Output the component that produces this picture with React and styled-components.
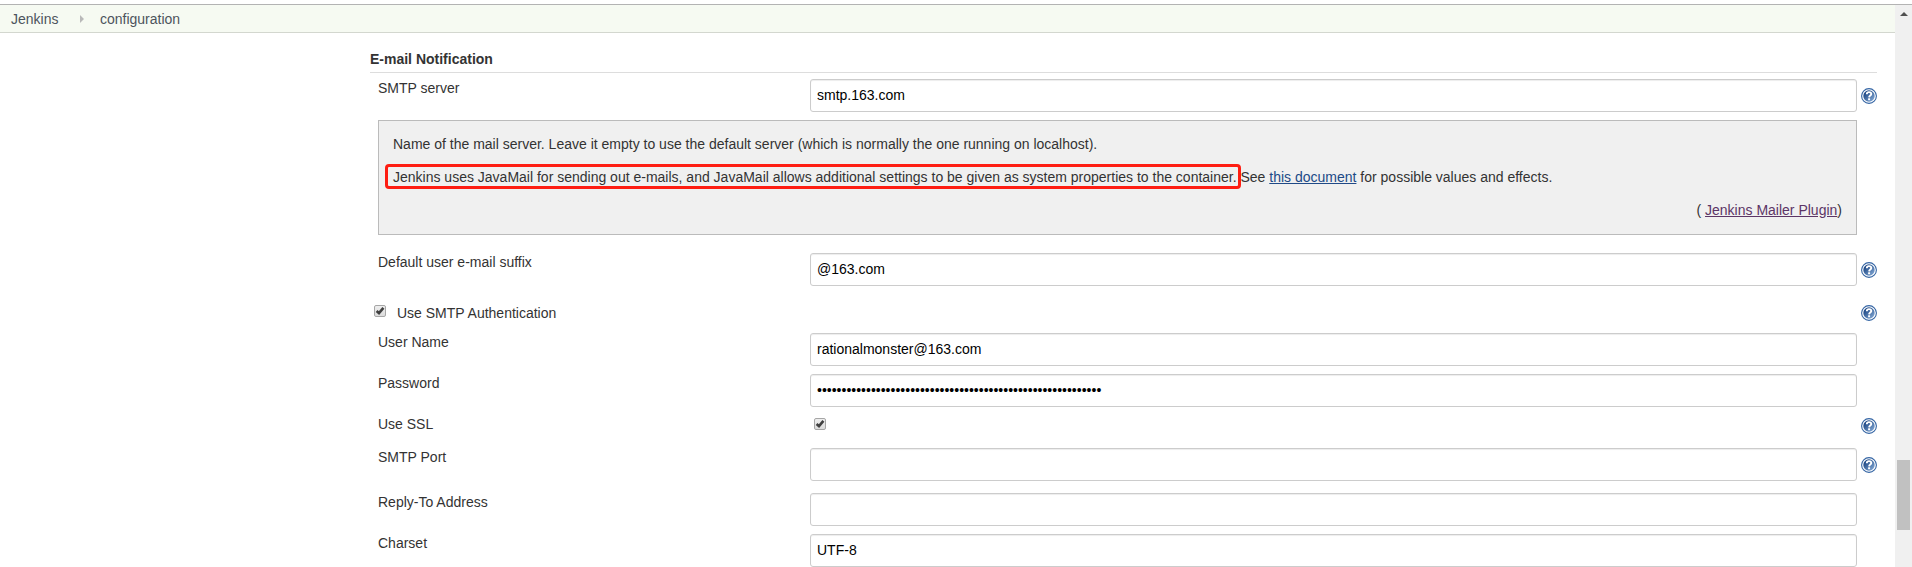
import React from "react";
import styled, { createGlobalStyle } from "styled-components";

const GlobalStyle = createGlobalStyle`
  *, *::before, *::after { box-sizing: border-box; }
  html, body { margin: 0; padding: 0; overflow: hidden; background: #fff; }
  body { font: 14px/18px "Liberation Sans", Arial, sans-serif; color: #333; }
`;

const Page = styled.div`
  display: flex;
  height: 567px;
  padding-top: 4px;
  overflow: hidden;
`;

const Viewport = styled.main`
  flex: 1;
  min-width: 0;
  border-top: 1px solid #b3b3b3;
`;

const BreadcrumbBar = styled.nav`
  display: flex;
  align-items: center;
  height: 28px;
  padding: 1px 11px 0;
  background: #f6faf2;
  border-bottom: 1px solid #d3d7cf;
  color: #4d545d;
`;

const Crumb = styled.a`
  white-space: nowrap;
`;

const CrumbArrow = styled.span`
  margin: 0 16px 0 21.5px;
  border: 4px solid transparent;
  border-left-color: #b9b9b9;
  border-right-width: 0;
`;

const Form = styled.form`
  display: flex;
  flex-direction: column;
  padding: 17px 18px 0 370px;
`;

const SectionTitle = styled.h2`
  margin: 0 0 6px;
  height: 23px;
  border-bottom: 1px solid #ddd;
  font-size: 14px;
  line-height: 18px;
  font-weight: bold;
`;

const Row = styled.div`
  display: grid;
  grid-template-columns: 432px 1fr 16px;
  column-gap: 0;
  align-items: start;
  height: ${(p) => p.$height || 33}px;
  margin-top: ${(p) => p.$gap || 0}px;
  padding-left: 8px;
`;

const CheckRow = styled.div`
  display: flex;
  align-items: flex-start;
  height: 18px;
  margin-top: 18px;
  padding-left: 4px;
`;

const CheckLabel = styled.label`
  flex: 1;
  padding-left: 11px;
`;

const Label = styled.label`
  white-space: nowrap;
`;

const Field = styled.div`
  display: flex;
  padding-right: 4px;
`;

const TextInput = styled.input`
  width: 100%;
  height: 33px;
  margin: 0;
  padding: 6px 6px 7px;
  border: 1px solid #ccc;
  border-radius: 3px;
  background: #fff;
  box-shadow: inset 0 1px 1px rgba(0, 0, 0, 0.075);
  color: #000;
  font: inherit;
  outline: none;
`;

const CheckMark = styled.span`
  display: flex;
  flex: none;
  align-items: center;
  justify-content: center;
  width: 12px;
  height: 12px;
  margin: ${(p) => p.$offset};
  border: 1px solid #a6a6a6;
  border-radius: 2px;
  background: linear-gradient(#eee, #dcdcdc);
`;

const HelpIconSlot = styled.span`
  display: block;
  width: 16px;
  height: 16px;
  margin-top: ${(p) => p.$top}px;
`;

const HelpPanel = styled.section`
  height: 115px;
  margin: 8px 20px 0 8px;
  padding: 14px;
  border: 1px solid #bbb;
  background: #f0f0f0;
`;

const HelpText = styled.p`
  margin: 0 0 15px;
  white-space: nowrap;
`;

const PluginNote = styled.div`
  text-align: right;
`;

const Highlight = styled.span`
  position: relative;
  &::after {
    content: "";
    position: absolute;
    inset: -5px -4px -4px -8px;
    border: 3px solid #fe1d12;
    border-radius: 4px;
  }
`;

const Link = styled.a`
  color: ${(p) => (p.$visited ? "#5c3566" : "#204a87")};
  text-decoration: underline;
`;

const ScrollTrack = styled.aside`
  display: flex;
  flex-direction: column;
  align-items: center;
  width: 17px;
  border-top: 1px solid #b3b3b3;
  background: #f0f0f0;
`;

const ScrollUp = styled.span`
  height: 4px;
  margin-top: 7px;
  border: 4px solid transparent;
  border-top: 0;
  border-bottom-color: #505050;
`;

const ScrollThumb = styled.span`
  width: 13px;
  height: 70px;
  margin-top: 444px;
  background: #c1c1c1;
`;

function Check({ offset }) {
  return (
    <CheckMark $offset={offset} role="checkbox" aria-checked="true">
      <svg width="10" height="10" viewBox="0 0 10 10">
        <path d="M1.6 5 4 7.2 8.4 1.9" fill="none" stroke="#404040" strokeWidth="2.6" />
      </svg>
    </CheckMark>
  );
}

function Help({ top }) {
  return (
    <HelpIconSlot $top={top}>
      <svg width="16" height="16" viewBox="0 0 16 16">
        <defs>
          <linearGradient id="helpBlue" x1="0" y1="0" x2="1" y2="1">
            <stop offset="0.2" stopColor="#204a87" />
            <stop offset="0.9" stopColor="#7fa5d2" />
          </linearGradient>
        </defs>
        <circle cx="8" cy="8" r="7.4" fill="#fff" stroke="#3465a4" strokeWidth="1.1" />
        <circle cx="8" cy="8" r="5.7" fill="url(#helpBlue)" />
        <path
          d="M5.8 6.2C5.8 4.5 6.8 4.1 8 4.1S10.3 4.7 10.3 6.1C10.3 7.6 8.2 7.6 8.1 9.4"
          fill="none"
          stroke="#fff"
          strokeWidth="1.9"
        />
        <rect x="7.1" y="10.3" width="2" height="1.9" fill="#fff" />
      </svg>
    </HelpIconSlot>
  );
}

function TextRow({ label, value, gap, help, type = "text" }) {
  return (
    <Row $gap={gap}>
      <Label>{label}</Label>
      <Field>
        <TextInput type={type} defaultValue={value} aria-label={label} />
      </Field>
      {help && <Help top={9} />}
    </Row>
  );
}

export default function App() {
  return (
    <>
      <GlobalStyle />
      <Page>
        <Viewport>
          <BreadcrumbBar>
            <Crumb>Jenkins</Crumb>
            <CrumbArrow />
            <Crumb>configuration</Crumb>
          </BreadcrumbBar>
          <Form>
            <SectionTitle>E-mail Notification</SectionTitle>
            <TextRow label="SMTP server" value="smtp.163.com" help />
            <HelpPanel>
              <HelpText>
                Name of the mail server. Leave it empty to use the default server (which is
                normally the one running on localhost).
              </HelpText>
              <HelpText>
                <Highlight>
                  Jenkins uses JavaMail for sending out e-mails, and JavaMail allows additional
                  settings to be given as system properties to the container.
                </Highlight>{" "}
                See <Link>this document</Link> for possible values and effects.
              </HelpText>
              <PluginNote>
                ( <Link $visited>Jenkins Mailer Plugin</Link>)
              </PluginNote>
            </HelpPanel>
            <TextRow label="Default user e-mail suffix" value="@163.com" gap={18} help />
            <CheckRow>
              <Check offset="1px 0 0" />
              <CheckLabel>Use SMTP Authentication</CheckLabel>
              <Help top={1} />
            </CheckRow>
            <TextRow label="User Name" value="rationalmonster@163.com" gap={11} />
            <TextRow label="Password" type="password" value={"x".repeat(58)} gap={8} />
            <Row $height={18} $gap={8}>
              <Label>Use SSL</Label>
              <Field>
                <Check offset="3px 0 0 4px" />
              </Field>
              <Help top={3} />
            </Row>
            <TextRow label="SMTP Port" value="" gap={15} help />
            <TextRow label="Reply-To Address" value="" gap={12} />
            <TextRow label="Charset" value="UTF-8" gap={8} />
          </Form>
        </Viewport>
        <ScrollTrack>
          <ScrollUp />
          <ScrollThumb />
        </ScrollTrack>
      </Page>
    </>
  );
}
